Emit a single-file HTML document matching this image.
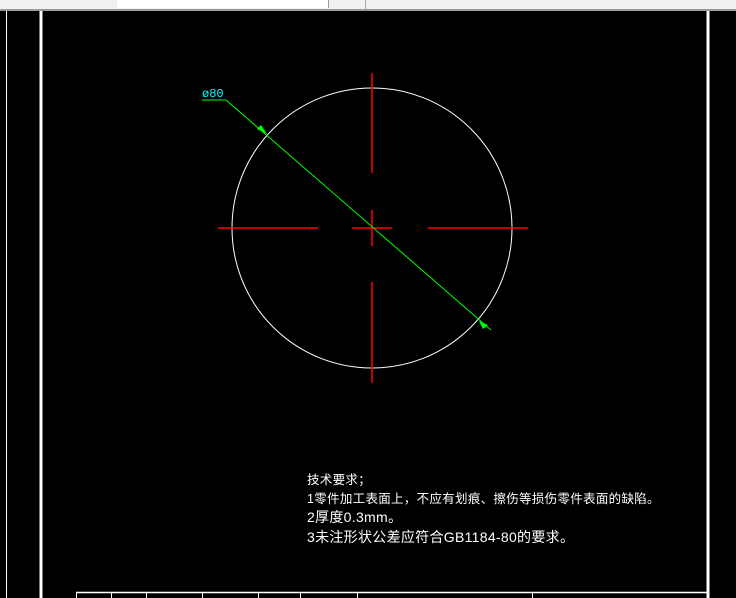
<!DOCTYPE html>
<html><head><meta charset="utf-8"><style>
html,body{margin:0;padding:0;width:736px;height:598px;overflow:hidden;background:#000}
.tb{position:absolute;left:0;top:0;width:736px;height:9px;background:#f0f0f0;border-bottom:2px solid #9a9a9a}
.in{position:absolute;left:117px;top:0;width:211px;height:8px;background:#fff;border-right:1px solid #999}
.tx{position:absolute;left:307px;color:#fff;font-family:"Liberation Sans","Noto Sans CJK SC",sans-serif;font-size:12.5px;white-space:nowrap;letter-spacing:0.3px}
</style></head><body>
<div class="tb"></div>
<div class="in"></div>
<div style="position:absolute;left:330px;top:0;width:35px;height:9px;border-right:1px solid #aaa"></div>
<svg width="736" height="598" style="position:absolute;left:0;top:0" xmlns="http://www.w3.org/2000/svg">
<g stroke="#fff" fill="none">
<line x1="6.5" y1="11" x2="6.5" y2="598" stroke-width="1"/>
<line x1="41" y1="11" x2="41" y2="598" stroke-width="3"/>
<line x1="708" y1="11" x2="708" y2="598" stroke-width="3"/>
<line x1="76" y1="592.5" x2="708" y2="592.5" stroke-width="1.5"/>
<g stroke-width="1">
<line x1="76.5" y1="592" x2="76.5" y2="598"/><line x1="111.5" y1="592" x2="111.5" y2="598"/>
<line x1="146.5" y1="592" x2="146.5" y2="598"/><line x1="202.5" y1="592" x2="202.5" y2="598"/>
<line x1="258.5" y1="592" x2="258.5" y2="598"/><line x1="300.5" y1="592" x2="300.5" y2="598"/>
<line x1="357.5" y1="592" x2="357.5" y2="598"/><line x1="532.5" y1="592" x2="532.5" y2="598"/>
</g>
<circle cx="372" cy="228" r="140" stroke-width="1"/>
</g>
<g stroke="#f00" stroke-width="1.5">
<line x1="218" y1="228" x2="318" y2="228"/><line x1="352" y1="228" x2="392" y2="228"/><line x1="428" y1="228" x2="528" y2="228"/>
<line x1="372" y1="73" x2="372" y2="173"/><line x1="372" y1="210" x2="372" y2="246"/><line x1="372" y1="282" x2="372" y2="383"/>
</g>
<g stroke="#0f0" stroke-width="1" fill="#0f0">
<line x1="202" y1="100" x2="226" y2="100"/>
<line x1="226" y1="100" x2="491" y2="330"/>
<polygon points="267,134 257,129 261,125" stroke="none"/>
<polygon points="479,321 488,325 483,329" stroke="none"/>
</g>
<text x="202" y="97" fill="#0ff" font-family="Liberation Mono,monospace" font-size="12">ø80</text>
</svg>
<div class="tx" style="top:469px">技术要求；</div>
<div class="tx" style="top:488px">1零件加工表面上，不应有划痕、擦伤等损伤零件表面的缺陷。</div>
<div class="tx" style="top:507px;font-size:14px">2厚度0.3mm。</div>
<div class="tx" style="top:527px;font-size:14px">3未注形状公差应符合GB1184-80的要求。</div>
</body></html>
